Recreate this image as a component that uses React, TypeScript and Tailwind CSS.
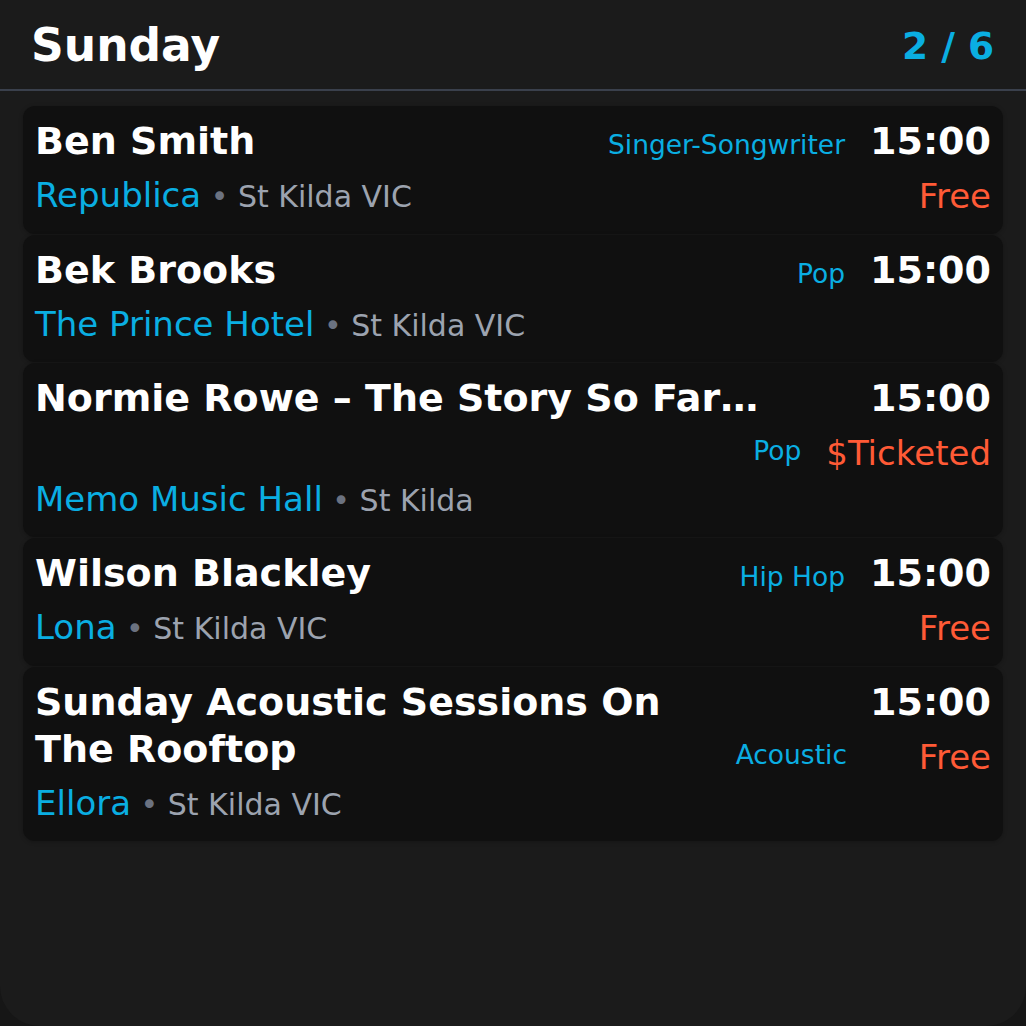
const gigs = [
  {
    title: "Ben Smith",
    genre: "Singer-Songwriter",
    genreTop: true,
    time: "15:00",
    price: "Free",
    venue: "Republica",
    suburb: "St Kilda VIC",
    tall: false,
  },
  {
    title: "Bek Brooks",
    genre: "Pop",
    genreTop: true,
    time: "15:00",
    price: "",
    venue: "The Prince Hotel",
    suburb: "St Kilda VIC",
    tall: false,
  },
  {
    title: "Normie Rowe – The Story So Far…",
    genre: "Pop",
    genreTop: false,
    time: "15:00",
    price: "$Ticketed",
    venue: "Memo Music Hall",
    suburb: "St Kilda",
    tall: true,
  },
  {
    title: "Wilson Blackley",
    genre: "Hip Hop",
    genreTop: true,
    time: "15:00",
    price: "Free",
    venue: "Lona",
    suburb: "St Kilda VIC",
    tall: false,
  },
  {
    title: "Sunday Acoustic Sessions On The Rooftop",
    genre: "Acoustic",
    genreTop: false,
    time: "15:00",
    price: "Free",
    venue: "Ellora",
    suburb: "St Kilda VIC",
    tall: false,
  },
];

const font = { fontFamily: '"DejaVu Sans", Verdana, sans-serif' };

export default function App() {
  return (
    <div className="min-h-screen bg-[#161616]" style={font}>
      <div className="flex h-[1026px] flex-col rounded-b-[40px] bg-[#1b1b1b]">
        {/* Header */}
        <div className="flex items-center justify-between border-b-2 border-[#3a404c] pl-[31px] pr-[32px] pt-[15px] pb-[13px]">
          <h1 className="text-[45.5px] font-bold leading-[61px] text-white">Sunday</h1>
          <span className="text-[37.5px] font-bold leading-[44px] text-[#0aaee2]">2 / 6</span>
        </div>

        {/* Gig list */}
        <div className="flex flex-col gap-px px-[23px] pt-[15px]">
          {gigs.map((gig) => (
            <div
              key={gig.title}
              className="flex gap-6 rounded-xl bg-[#101010] px-3 pt-[12px] pb-[17px] shadow-[0_1px_4px_rgba(0,0,0,0.25)]"
            >
              <div className="min-w-0 flex-1">
                <div
                  className={
                    gig.tall
                      ? "h-[94px] whitespace-nowrap text-[38px] font-bold leading-[47px] text-white"
                      : "text-[38px] font-bold leading-[47px] text-white"
                  }
                >
                  {gig.title}
                </div>
                <div className="mt-[10px] h-[41px] whitespace-nowrap text-[34px] leading-[41px]">
                  <span className="text-[#0aaee2]">{gig.venue}</span>
                  <span className="text-[30px] leading-none text-[#6b7280]"> • </span>
                  <span className="text-[30px] leading-none text-[#9ca3af]">{gig.suburb}</span>
                </div>
              </div>

              <div className="flex shrink-0 flex-col items-end">
                <div className="flex items-baseline gap-[25px]">
                  {gig.genreTop && (
                    <span className="text-[26.5px] leading-[32px] text-[#0aaee2]">{gig.genre}</span>
                  )}
                  <span className="min-w-[119px] text-right text-[38px] font-bold leading-[47px] text-white">
                    {gig.time}
                  </span>
                </div>
                {(gig.price || !gig.genreTop) && (
                  <div className="mt-[11px] flex items-start gap-[25px]">
                    {!gig.genreTop && (
                      <span className="mt-[2px] text-[26.5px] leading-[32px] text-[#0aaee2]">{gig.genre}</span>
                    )}
                    <span className="min-w-[119px] text-right text-[34px] leading-[41px] text-[#ff5a36]">
                      {gig.price}
                    </span>
                  </div>
                )}
              </div>
            </div>
          ))}
        </div>
      </div>
    </div>
  );
}
